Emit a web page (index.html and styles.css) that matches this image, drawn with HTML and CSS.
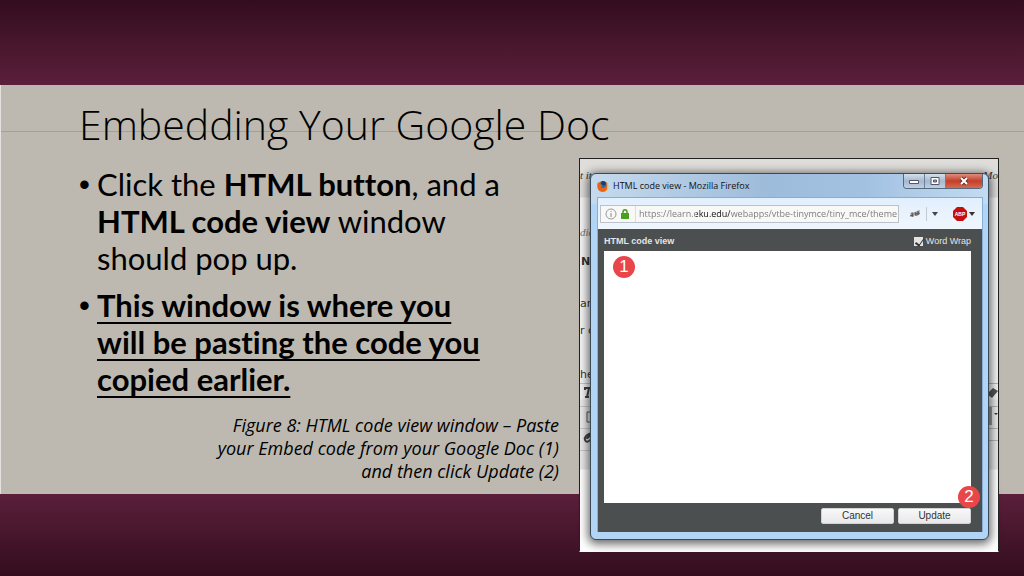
FILE: index.html
```html
<!doctype html>
<html lang="en">
  <head>
    <meta charset="UTF-8" />
    <meta name="viewport" content="width=device-width, initial-scale=1.0" />
    <title>Embedding Your Google Doc</title>
    <link rel="stylesheet" href="styles.css">
  </head>
  <body>
    <main class="slide">
      <div class="panel"></div>

      <section class="content">
        <h1>Embedding Your Google Doc</h1>
        <ul class="steps">
          <li>Click the <b>HTML button</b>, and a <b>HTML code view</b> window should pop up.</li>
          <li><b class="underlined">This window is where you will be pasting the code you copied earlier.</b></li>
        </ul>
        <p class="caption">
          Figure 8: HTML code view window – Paste your Embed code from your Google Doc (1) and then click Update (2)
        </p>
      </section>

      <div class="shot">
        <!-- Bits of the editor page showing around the popup -->
        <div class="behind" aria-hidden="true">
          <i class="bit serif row-1">t ite</i>
          <i class="bit serif row-2">dic</i>
          <b class="bit row-3">N</b>
          <span class="bit row-4">ar</span>
          <span class="bit row-5">r c</span>
          <span class="bit row-6">he</span>
          <span class="tools left">
            <svg viewBox="0 0 14 70">
              <path d="M0 .5h14M0 23.500h14M0 45.500h14M0 67.500h14" stroke="#c6c6c6" />
              <path d="M5 7V5h8M9 5l-2 9M5 14h4" stroke="#444" stroke-width="2" fill="none" />
              <path d="M13 29H7v10h6" stroke="#555" fill="none" />
              <path d="M12 50c-5 1-8 4-7 7s4 2 7-2M12 52c-3 1-5 3-5 4" stroke="#444" stroke-width="2" fill="none" />
            </svg>
          </span>
          <span class="tools right">
            <svg viewBox="0 0 12 70">
              <path d="M0 .5h12M0 23.500h12M0 45.500h12M0 57.500h12" stroke="#b5b5b5" />
              <path d="M1 11l6-6 5 3-6 7z" fill="#555" />
              <path d="M0 24h6v18H0z" fill="#999" />
              <path d="M8 30h4l-2 2z" fill="#333" />
            </svg>
          </span>
          <i class="bit serif row-1 far">Mo</i>
        </div>

        <div class="window">
          <header class="titlebar">
            <svg class="firefox" viewBox="0 0 12 12">
              <circle cx="6" cy="6" r="5" fill="#2f6fae" />
              <path d="M5 1c2 0 4 1 4 3L7 6 4 4z" fill="#173f75" />
              <path d="M1 2l1 1 2-1-1 2 2 1-1 2c1 2 4 1 5-1l1-3c2 4 0 9-4 9-5 0-7-5-5-10z" fill="#e8641b" />
              <path d="M9 2c4 3 3 8-1 10 2-2 3-5 1-10z" fill="#f6b53c" />
            </svg>
            <span class="window-title">HTML code view - Mozilla Firefox</span>
            <div class="window-buttons">
              <button class="min" aria-label="Minimize">
                <svg viewBox="0 0 12 10"><path d="M1.500 4.500h9v3h-9z" fill="#fff" stroke="#556" /></svg>
              </button>
              <button class="max" aria-label="Maximize">
                <svg viewBox="0 0 12 10"><path d="M2 1.500h8v7H2z" fill="#fff" stroke="#556" /><path d="M4.500 4h3v2h-3z" fill="#9ab" stroke="#556" /></svg>
              </button>
              <button class="close" aria-label="Close">
                <svg viewBox="0 0 12 10"><path d="M3 2l6 6M9 2L3 8" stroke="#6e3030" stroke-width="4" /><path d="M3 2l6 6M9 2L3 8" stroke="#fff" stroke-width="2" /></svg>
              </button>
            </div>
          </header>

          <div class="frame">
            <div class="toolbar">
              <div class="address">
                <svg class="info" viewBox="0 0 12 12">
                  <circle cx="6" cy="6" r="5" fill="none" stroke="#999" />
                  <path d="M6 5v4M6 3v1" stroke="#888" />
                </svg>
                <svg class="lock" viewBox="0 0 8 10">
                  <path d="M2 5V3c0-3 4-3 4 0v2" fill="none" stroke="#4a9e22" stroke-width="1.500" />
                  <path d="M0 4h8v6H0z" fill="#4a9e22" />
                </svg>
                <input class="url" type="text" aria-label="Address" value="https://learn.eku.edu/webapps/vtbe-tinymce/tiny_mce/theme" />
              </div>
              <svg class="addon" viewBox="0 0 12 12">
                <path d="M1 5l3-1 1 1 3-2 3-1-1 3 1 1-3 2-2-1-3 2-2-1 1-2z" fill="#999" />
                <path d="M3 5l1 4M6 4l1 4M9 3v4M1 8l3-1M7 6l4-1" stroke="#555" />
              </svg>
              <span class="divider"></span>
              <svg class="arrow" viewBox="0 0 6 4"><path d="M0 0h6L3 4z" fill="#444" /></svg>
              <svg class="abp" viewBox="0 0 14 14">
                <path d="M4 0h6l4 4v6l-4 4H4l-4-4V4z" fill="#c70d0d" />
                <text x="7" y="9" text-anchor="middle">ABP</text>
              </svg>
              <svg class="arrow" viewBox="0 0 6 4"><path d="M0 0h6L3 4z" fill="#333" /></svg>
            </div>

            <form class="editor">
              <div class="editor-head">
                <label class="editor-title" for="source">HTML code view</label>
                <label class="wrap"><input type="checkbox" checked />Word Wrap</label>
              </div>
              <textarea id="source" class="source"></textarea>
              <div class="actions">
                <button type="button">Cancel</button>
                <button type="button">Update</button>
              </div>
              <span class="badge one">1</span>
              <span class="badge two">2</span>
            </form>
          </div>
        </div>
      </div>
    </main>
  </body>
</html>
```
FILE: styles.css
```css
:root {
  --wine-dark: #330d1e;
  --wine: #5b1f3b;
  --stone: #bdb9b0;
  --chrome: #4c4f4f;
  --red: #e9464a;
}

* {
  box-sizing: border-box;
}

body {
  margin: 0;
  color: #000;
  font-family: Lato, "Liberation Sans", sans-serif;
}

button,
input,
textarea {
  font: inherit;
}

svg {
  display: block;
}

/* Slide - wine bands above and below a stone panel */
.slide {
  display: grid;
  grid-template-columns: minmax(0, 579fr) minmax(0, 420fr) minmax(0, 25fr);
  grid-template-rows: 85px 1fr 82px;
  min-height: 100vh;
  background:
    linear-gradient(var(--wine-dark), var(--wine)) top / 100% 85px no-repeat,
    linear-gradient(var(--wine), var(--wine-dark)) bottom / 100% 82px no-repeat;
}

.panel {
  grid-area: 2 / 1 / 3 / 4;
  border-left: 1px solid #e4e2de;
  background:
    linear-gradient(#a3a098, #a3a098) 0 46px / 100% 1px no-repeat,
    var(--stone);
}

/* Text column */
.content {
  grid-area: 2 / 1 / 3 / 2;
  padding: 13px 20px 8px 79px;
}

h1 {
  margin: 0 0 16px;
  font-family: "Open Sans", "Noto Sans", sans-serif;
  font-size: 41px;
  font-weight: 300;
  line-height: 52px;
  white-space: nowrap;
}

.steps {
  margin: 0;
  padding: 0 56px 0 18px;
  list-style: none;
  font-size: 31px;
  font-variant-ligatures: none;
  line-height: 37px;
}

.steps li {
  position: relative;
  margin-bottom: 10px;
}

.steps li::before {
  content: "•";
  position: absolute;
  left: -18px;
  font-family: "Liberation Sans", sans-serif;
}

.underlined {
  text-decoration: underline;
  text-decoration-thickness: 2px;
  text-underline-offset: 5px;
  text-decoration-skip-ink: none;
}

.caption {
  max-width: 350px;
  margin: 16px 0 0 auto;
  font-family: "Open Sans", "Noto Sans", sans-serif;
  font-size: 18px;
  font-style: italic;
  line-height: 23px;
  text-align: right;
}

/* Screenshot of the popup, runs over the lower band */
.shot {
  position: relative;
  grid-area: 2 / 2 / 4 / 3;
  margin: 73px 0 24px;
  padding: 14px 9px 11px 10px;
  border: 1px solid #222;
  border-bottom-color: #fff;
  background: linear-gradient(#deddda 0 38px, #f4f4f4 39px 240px, #e9e9e9 241px 310px, #fff 311px);
  display: flex;
}

.behind {
  position: absolute;
  inset: 0;
  overflow: hidden;
  color: #333;
  font: 11px/14px "DejaVu Sans", sans-serif;
}

.bit {
  position: absolute;
  left: 0;
}

.serif {
  font-family: "Liberation Serif", serif;
}

.row-1 { top: 9px; }
.row-2 { top: 66px; color: #777; }
.row-3 { top: 96px; left: 1px; }
.row-4 { top: 138px; }
.row-5 { top: 165px; }
.row-6 { top: 209px; }

.far {
  right: 0;
  left: auto;
}

.tools {
  position: absolute;
  top: 224px;
}

.tools.left { left: 0; width: 14px; }
.tools.right { right: 0; width: 12px; }

/* Firefox window */
.window {
  position: relative;
  flex: 1;
  min-width: 0;
  display: flex;
  flex-direction: column;
  padding: 0 5px 7px 6px;
  border: 1px solid #3b4a58;
  border-radius: 6px;
  background: linear-gradient(90deg, #c5daed, #9dbbda 45%, #a3c2e2 70%, #c3dbf2) top / 100% 30px no-repeat, #b3d5f5;
  box-shadow: 0 2px 10px 2px rgba(0, 0, 0, 0.6);
  font-family: "Open Sans", "Noto Sans", sans-serif;
  font-size: 9px;
}

.titlebar {
  display: flex;
  align-items: center;
  height: 23px;
}

.firefox {
  width: 12px;
  height: 12px;
}

.window-title {
  flex: 1;
  margin-left: 4px;
  color: #111;
}

.window-buttons {
  display: flex;
  align-self: flex-start;
  border: 1px solid #56687c;
  border-top: 0;
  border-radius: 0 0 4px 4px;
  overflow: hidden;
}

.window-buttons button {
  display: flex;
  justify-content: center;
  align-items: center;
  width: 21px;
  height: 14px;
  padding: 0;
  border: 0;
  border-right: 1px solid #6d8096;
  background: linear-gradient(#d3e0ed, #a5b9cf 50%, #bdd0e3);
}

.window-buttons svg {
  width: 12px;
  height: 10px;
}

.window-buttons .close {
  width: 36px;
  border-right: 0;
  background: linear-gradient(#e08d7d, #c33f2b 50%, #d56a50);
}

.frame {
  flex: 1;
  display: flex;
  flex-direction: column;
  border: 1px solid #86aed4;
  border-bottom: 0;
}

.toolbar {
  display: flex;
  align-items: center;
  height: 31px;
  padding: 0 7px 0 2px;
  background: linear-gradient(#e1effd, #f0f6fd);
}

.address {
  flex: 1;
  display: flex;
  align-items: center;
  min-width: 0;
  height: 18px;
  padding: 0 1px 0 4px;
  border: 1px solid #b9c2cb;
  background: #f8f8f7;
}

.info {
  width: 12px;
  height: 12px;
}

.lock {
  width: 8px;
  height: 10px;
  margin: 0 6px 0 4px;
}

/* Domain is darker than the rest of the address */
.url {
  flex: 1;
  min-width: 0;
  height: 16px;
  padding: 0 0 0 3px;
  border: 0;
  border-left: 1px solid #ddd;
  outline: 0;
  background: linear-gradient(90deg, #777 60px, #111 60px 94px, #777 94px);
  background-clip: text;
  color: transparent;
}

.addon {
  width: 12px;
  height: 12px;
  margin-left: 10px;
}

.divider {
  width: 1px;
  height: 14px;
  margin: 0 5px;
  background: #c2cbd4;
}

.arrow {
  width: 6px;
  height: 4px;
}

.abp {
  width: 14px;
  height: 14px;
  margin: 0 2px 0 15px;
}

.abp text {
  fill: #fff;
  font: bold 5px "Liberation Sans", sans-serif;
}

/* Code editor popup body */
.editor {
  position: relative;
  flex: 1;
  display: flex;
  flex-direction: column;
  padding: 0 11px 8px 6px;
  background: var(--chrome);
  color: #e4e4e4;
  font-family: "Liberation Sans", sans-serif;
}

.editor-head {
  display: flex;
  justify-content: space-between;
  align-items: center;
  height: 22px;
  padding-top: 2px;
}

.editor-title {
  font-weight: bold;
}

.wrap {
  display: flex;
  align-items: center;
  gap: 3px;
}

.wrap input {
  appearance: none;
  width: 9px;
  height: 9px;
  margin: 0;
  background: #e4e4e4;
}

.wrap input:checked::before {
  content: "";
  display: block;
  width: 4px;
  height: 7px;
  margin-left: 3px;
  border: solid #333;
  border-width: 0 1px 2px 0;
  transform: rotate(35deg);
}

.source {
  flex: 1;
  width: 100%;
  padding: 4px;
  border: 0;
  outline: 0;
  resize: none;
  background: #fff;
}

.actions {
  display: flex;
  justify-content: flex-end;
  gap: 4px;
  padding-top: 5px;
}

.actions button {
  width: 73px;
  height: 16px;
  padding: 0;
  border: 1px solid #d2d2d2;
  border-radius: 2px;
  background: linear-gradient(#f8f8f8, #e8e8ea);
  color: #333;
  font-size: 10px;
  line-height: 14px;
}

/* Numbered callouts */
.badge {
  position: absolute;
  width: 22px;
  height: 22px;
  border-radius: 50%;
  background: var(--red);
  color: #fff;
  font-size: 17px;
  line-height: 22px;
  text-align: center;
}

.badge.one {
  top: 27px;
  left: 15px;
}

.badge.two {
  right: 2px;
  bottom: 24px;
}
```
